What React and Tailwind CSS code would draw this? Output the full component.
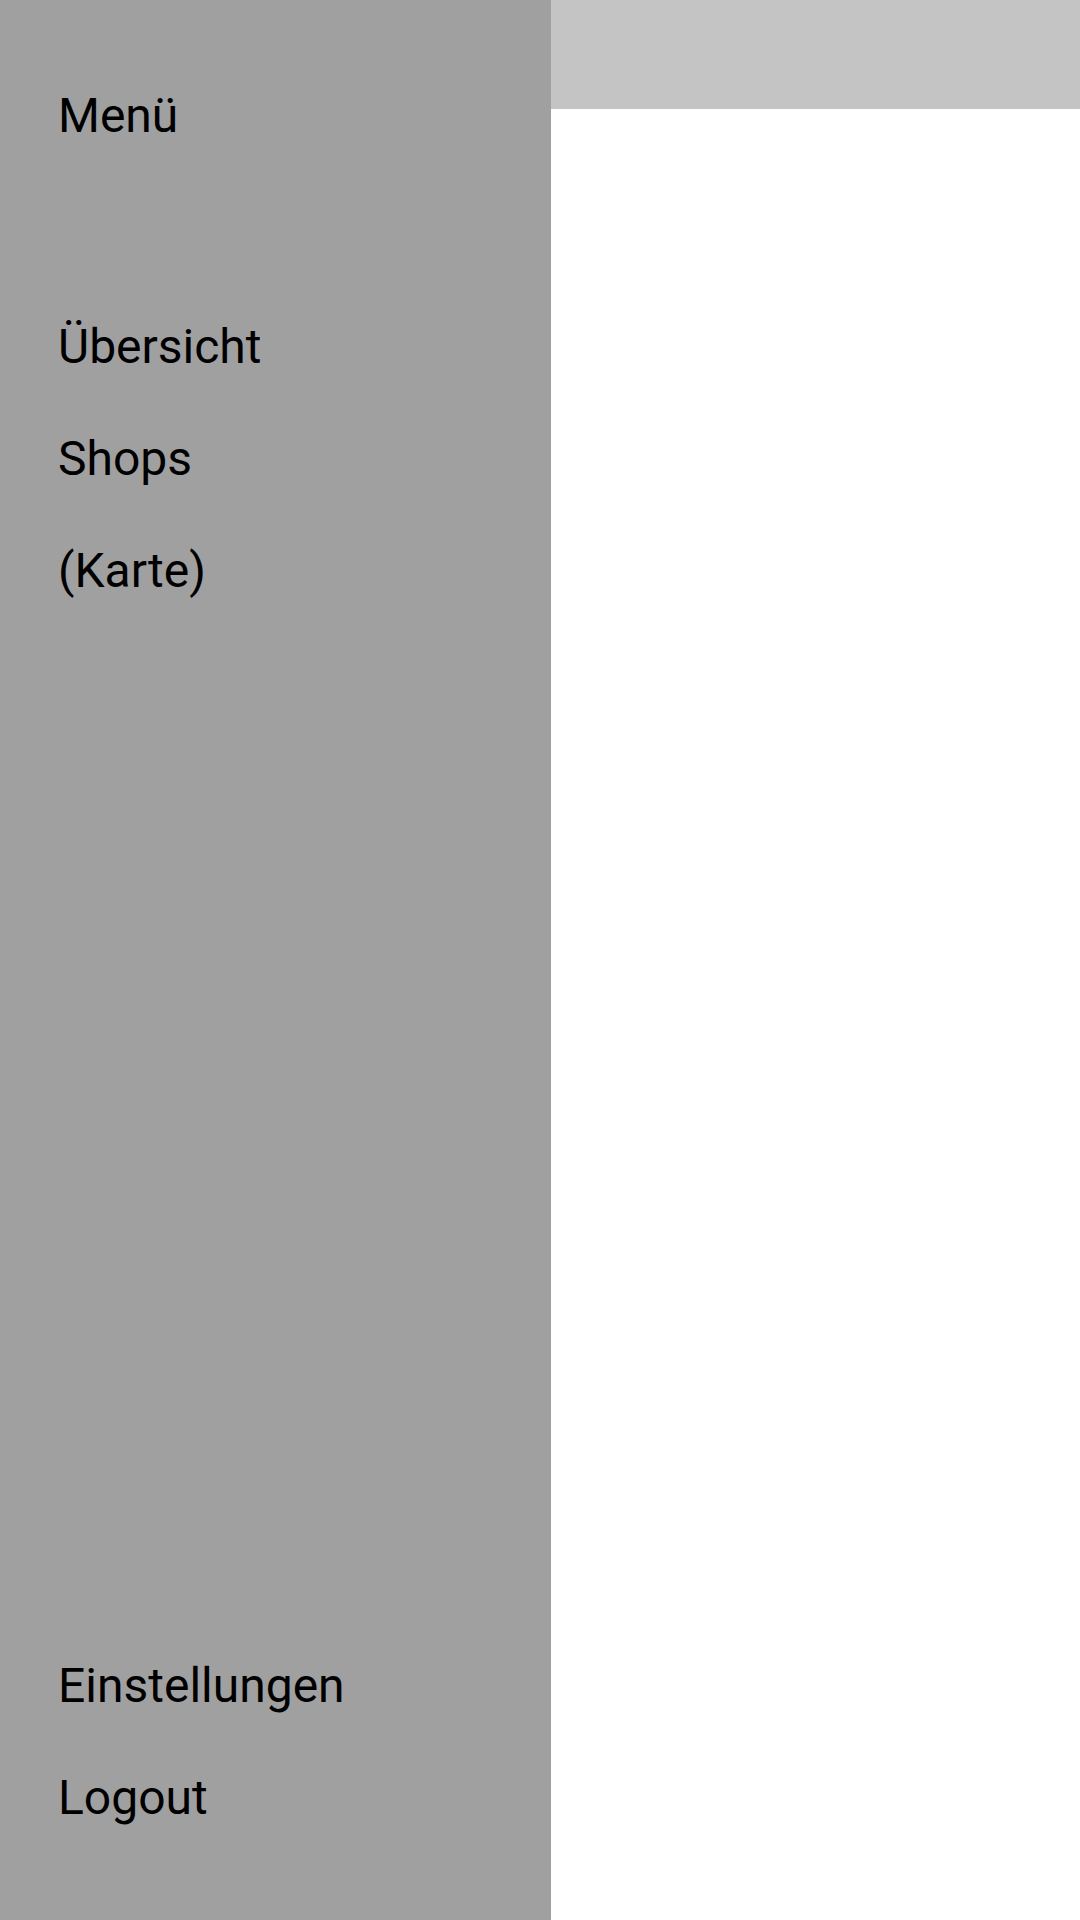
import React from "react";

const navItems = ["Übersicht", "Shops", "(Karte)"];
const bottomItems = ["Einstellungen", "Logout"];

const App = () => {
  return (
    <div
      className="flex h-[1920px] w-[1080px] bg-white text-black"
      style={{ fontFamily: "Roboto, 'Noto Sans', sans-serif" }}
    >
      {/* Seitenmenü */}
      <aside className="flex h-full w-[551px] shrink-0 flex-col bg-[#a0a0a0] pl-[58px] pt-[88px] pb-[94px] text-[48px] leading-[56px]">
        <div>Menü</div>

        <nav className="mt-[175px] flex flex-col gap-[56px]">
          {navItems.map((item) => (
            <a key={item} className="cursor-pointer">
              {item}
            </a>
          ))}
        </nav>

        <div className="mt-auto flex flex-col gap-[56px]">
          {bottomItems.map((item) => (
            <a key={item} className="cursor-pointer">
              {item}
            </a>
          ))}
        </div>
      </aside>

      {/* Inhalt */}
      <main className="flex flex-1 flex-col">
        <header className="h-[109px] bg-[#c4c4c4]" />
        <div className="flex-1 bg-white" />
      </main>
    </div>
  );
};

export default App;
